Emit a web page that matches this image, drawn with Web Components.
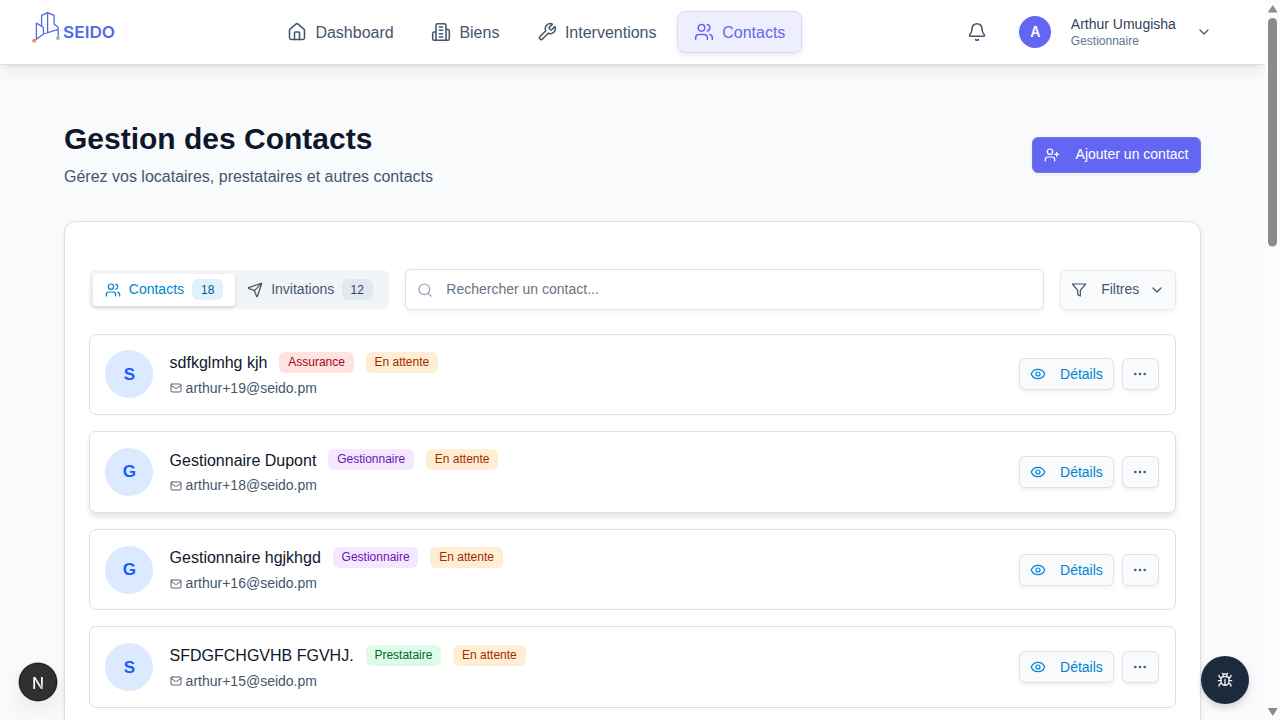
<!DOCTYPE html>
<html lang="fr">
<head>
<meta charset="utf-8">
<title>SEIDO - Gestion des Contacts</title>
<style>
html,body{margin:0;height:100%;overflow:hidden;background:#f8fafc;font-family:"Liberation Sans",Arial,sans-serif}
</style>
</head>
<body>
<seido-app></seido-app>
<script>
const ICONS = {
  home:'<path d="M15 21v-8a1 1 0 0 0-1-1h-4a1 1 0 0 0-1 1v8"/><path d="M3 10a2 2 0 0 1 .709-1.528l7-5.999a2 2 0 0 1 2.582 0l7 5.999A2 2 0 0 1 21 10v9a2 2 0 0 1-2 2H5a2 2 0 0 1-2-2z"/>',
  building:'<path d="M6 22V4a2 2 0 0 1 2-2h8a2 2 0 0 1 2 2v18Z"/><path d="M6 12H4a2 2 0 0 0-2 2v6a2 2 0 0 0 2 2h2"/><path d="M18 9h2a2 2 0 0 1 2 2v9a2 2 0 0 1-2 2h-2"/><path d="M10 6h4M10 10h4M10 14h4M10 18h4"/>',
  wrench:'<path d="M14.7 6.3a1 1 0 0 0 0 1.4l1.6 1.6a1 1 0 0 0 1.4 0l3.77-3.77a6 6 0 0 1-7.94 7.94l-6.91 6.91a2.12 2.12 0 0 1-3-3l6.91-6.91a6 6 0 0 1 7.94-7.94l-3.76 3.76z"/>',
  users:'<path d="M16 21v-2a4 4 0 0 0-4-4H6a4 4 0 0 0-4 4v2"/><circle cx="9" cy="7" r="4"/><path d="M22 21v-2a4 4 0 0 0-3-3.87"/><path d="M16 3.13a4 4 0 0 1 0 7.75"/>',
  bell:'<path d="M10.268 21a2 2 0 0 0 3.464 0"/><path d="M3.262 15.326A1 1 0 0 0 4 17h16a1 1 0 0 0 .74-1.673C19.41 13.956 18 12.499 18 8A6 6 0 0 0 6 8c0 4.499-1.411 5.956-2.738 7.326"/>',
  chevron:'<path d="m6 9 6 6 6-6"/>',
  userplus:'<path d="M16 21v-2a4 4 0 0 0-4-4H6a4 4 0 0 0-4 4v2"/><circle cx="9" cy="7" r="4"/><path d="M19 8v6M22 11h-6"/>',
  send:'<path d="M14.536 21.686a.5.5 0 0 0 .937-.024l6.5-19a.496.496 0 0 0-.635-.635l-19 6.5a.5.5 0 0 0-.024.937l7.93 3.18a2 2 0 0 1 1.112 1.11z"/><path d="m21.854 2.147-10.94 10.939"/>',
  search:'<circle cx="11" cy="11" r="8"/><path d="m21 21-4.3-4.3"/>',
  filter:'<path d="M22 3H2l8 9.46V19l4 2v-8.54z"/>',
  eye:'<path d="M2.062 12.348a1 1 0 0 1 0-.696 10.75 10.75 0 0 1 19.876 0 1 1 0 0 1 0 .696 10.75 10.75 0 0 1-19.876 0"/><circle cx="12" cy="12" r="3"/>',
  dots:'<circle cx="12" cy="12" r="1"/><circle cx="19" cy="12" r="1"/><circle cx="5" cy="12" r="1"/>',
  mail:'<rect width="20" height="16" x="2" y="4" rx="2"/><path d="m22 7-8.97 5.7a1.94 1.94 0 0 1-2.06 0L2 7"/>',
  bug:'<path d="m8 2 1.88 1.88M14.12 3.88 16 2M9 7.13v-1a3.003 3.003 0 1 1 6 0v1"/><path d="M12 20c-3.3 0-6-2.7-6-6v-3a4 4 0 0 1 4-4h4a4 4 0 0 1 4 4v3c0 3.3-2.7 6-6 6M12 20v-9"/><path d="M6.53 9C4.6 8.8 3 7.1 3 5M6 13H2M3 21c0-2.1 1.7-3.9 3.8-4M20.97 5c0 2.1-1.6 3.8-3.5 4M22 13h-4M17.2 17c2.1.1 3.8 1.9 3.8 4"/>'
};
const define = (name, render) => customElements.define(name, class extends HTMLElement {
  connectedCallback() {
    if (this.shadowRoot) return;
    this.attachShadow({mode:'open'}).innerHTML = '<style>*{box-sizing:border-box}</style>' + render(this);
  }
});
const a = (el, n, d='') => el.getAttribute(n) ?? d;

define('ui-icon', el => `<style>:host{display:block;flex:none;width:${a(el,'size','16')}px;height:${a(el,'size','16')}px}svg{display:block;width:100%;height:100%}</style>
<svg viewBox="0 0 24 24" fill="none" stroke="currentColor" stroke-width="${a(el,'stroke','1.85')}" stroke-linecap="round" stroke-linejoin="round">${ICONS[a(el,'name')]}</svg>`);

define('seido-logo', () => `<style>:host{display:block;width:90px;height:40px}svg{display:block}</style>
<svg width="90" height="40" viewBox="0 0 90 40" fill="none" stroke="#4f6be3" stroke-width="1.3" stroke-linejoin="round" stroke-linecap="round">
<path d="M4.400 27V11.100l6.900 4.100v5.600M9.600 13.800V3.400L15.600.7l6.500 2.700v8.600l4.100 3.600v9.500M15.600.7v19.500M3 28.200l8.500-6.200 14.700-4.600"/>
<circle cx="2.1" cy="28.700" r="2" fill="#fb8878" stroke="none"/><circle cx="26" cy="25.900" r="2" fill="#7fcab4" stroke="none"/>
<text x="31.100" y="25.700" textLength="52" lengthAdjust="spacingAndGlyphs" font-family="Inter" font-weight="600" font-size="16.400" fill="#4f6be3" stroke="none">SEIDO</text></svg>`);

define('nav-item', el => `<style>
:host{display:flex;align-items:center;gap:8px;height:41.6px;padding:0 15.8px;border:1px solid transparent;border-radius:8px;box-sizing:border-box;color:#45556c;font-size:16px;line-height:24px;width:${a(el,'w')}px;white-space:nowrap}
:host([active]){background:#efeefd;border-color:#dad9fa;color:#6366f1;box-shadow:0 3px 6px rgba(0,0,0,.08)}
span{padding-top:2px}
</style><ui-icon name="${a(el,'icon')}" size="20"></ui-icon><span><slot></slot></span>`);

define('user-menu', () => `<style>
:host{display:flex;align-items:center;color:#45556c}
.av{width:32px;height:32px;border-radius:50%;background:#6366f1;color:#fff;display:flex;align-items:center;justify-content:center;font-size:14px;font-weight:600;font-family:Inter,sans-serif;margin:0 19.6px 0 32.6px}
.n{font-size:14px;line-height:17px;padding-top:1px;color:#314158}.r{font-size:12px;line-height:16px;color:#62748e}
.t{width:125.2px;white-space:nowrap}
</style><ui-icon name="bell" size="20"></ui-icon><div class="av">A</div><div class="t"><div class="n">Arthur Umugisha</div><div class="r">Gestionnaire</div></div><ui-icon name="chevron"></ui-icon>`);

define('app-header', () => `<style>
:host{display:flex;align-items:center;height:64.8px;background:#fff;border-bottom:1px solid #dadee6;box-shadow:0 10px 15px -3px rgba(0,0,0,.06),0 4px 6px -4px rgba(0,0,0,.1);padding:0 52.8px 0 32px;box-sizing:border-box;position:relative;z-index:1}
seido-logo{margin-top:1px}nav{display:flex;gap:4px;margin-left:148.6px}user-menu{margin-left:auto}
</style><seido-logo></seido-logo>
<nav><nav-item w="140" icon="home">Dashboard</nav-item><nav-item w="101.5" icon="building">Biens</nav-item><nav-item w="153.300" icon="wrench">Interventions</nav-item><nav-item w="124.8" icon="users" active>Contacts</nav-item></nav><user-menu></user-menu>`);

define('ui-button', el => `<style>
:host{display:flex;align-items:center;box-sizing:border-box;height:32px;border:1px solid #dde1e8;border-radius:6px;background:#f8fafc;color:#0084d1;padding:0 9.8px;font-size:14px;line-height:20px;box-shadow:0 2px 4px rgba(0,0,0,.06);white-space:nowrap}
:host([kind=primary]){width:168.8px;height:36px;background:#6366f1;border-color:#7376f3;color:#fff;padding:0 11px}
:host([kind=filter]){width:116px;height:40px;border-color:#e6eaf2;color:#45556c;padding:0 10.2px}
:host([kind=more]){width:37.6px;color:#45556c}
span{margin-left:14px}:host([kind=primary]) span{margin-left:15.6px}
:host([kind=primary]) span,:host([kind=filter]) span{padding-bottom:1.600px}.f{margin-left:auto}
</style><ui-icon name="${a(el,'icon')}"></ui-icon>${el.textContent?'<span><slot></slot></span>':''}${a(el,'kind')==='filter'?'<ui-icon class="f" name="chevron"></ui-icon>':''}`);

define('page-heading', () => `<style>
:host{display:flex;align-items:center;justify-content:space-between;height:68px;margin-bottom:32px}
h1{margin:0;font-size:30px;line-height:36px;color:#0f172b}p{margin:8px 0 0;font-size:16px;line-height:24px;color:#45556c}
</style><div><h1>Gestion des Contacts</h1><p>Gérez vos locataires, prestataires et autres contacts</p></div><ui-button kind="primary" icon="userplus">Ajouter un contact</ui-button>`);

define('tab-item', el => `<style>
:host{display:flex;align-items:center;height:32px;box-sizing:border-box;padding:0 12px;border-radius:4px;font-size:14px;line-height:20px;color:#45556c;width:${a(el,'w')}px;white-space:nowrap}
:host([active]){background:#fff;color:#0084d1;box-shadow:0 2px 4px rgba(0,0,0,.12)}
span{margin-left:8px;padding-bottom:1.600px}b{margin-left:auto;font-weight:400;font-size:12px;line-height:20.600px;padding-top:1px;width:31px;text-align:center;border-radius:6px;background:#e2e8f0;color:#314158}
:host([active]) b{background:#dff2fe;color:#00598a}
</style><ui-icon name="${a(el,'icon')}"></ui-icon><span><slot></slot></span><b>${a(el,'count')}</b>`);

define('tab-list', () => `<style>:host{display:flex;align-items:center;box-sizing:border-box;width:300px;height:39.6px;padding:0 4px;background:#f1f5f9;border-radius:6px}</style><slot></slot>`);

define('search-field', () => `<style>
:host{display:flex;align-items:center;flex:1;height:40.4px;box-sizing:border-box;border:1px solid #dfe2e9;border-radius:6px;background:#fff;padding:0 11px;box-shadow:0 2px 4px rgba(0,0,0,.05);font-size:14px;color:#6a7282}
ui-icon{color:#90a1b9}span{margin-left:13.5px;padding-bottom:1.600px}
</style><ui-icon name="search"></ui-icon><span>Rechercher un contact...</span>`);

define('ui-badge', el => {
  const c = {red:['#ffe2e2','#9f0712'],purple:['#f3e8ff','#6e11b0'],green:['#dcfce7','#016630'],orange:['#ffedd4','#9f2d00']}[a(el,'tone')];
  return `<style>:host{display:block;height:21px;box-sizing:border-box;padding:0 8.8px;border-radius:6px;background:${c[0]};color:${c[1]};font-size:12px;line-height:20px;white-space:nowrap}</style><slot></slot>`;
});

define('contact-row', el => `<style>
:host{display:flex;align-items:center;box-sizing:border-box;height:81.6px;padding:0 15.8px;border:1px solid #dcdfe6;border-radius:7px;background:#fff}
:host([raised]){box-shadow:0 4px 7px -1px rgba(0,0,0,.13)}
.av{width:48px;height:48px;border-radius:50%;background:#dbeafe;color:#155dfc;font-size:17px;font-weight:700;display:flex;align-items:center;justify-content:center;margin:0 16.300px 0 -.3px;padding-top:1px}
.top{display:flex;gap:12px;align-items:center;height:24px;font-size:16px;color:#0f172b;white-space:nowrap}
.top span{padding-top:1.600px}
.mail{display:flex;align-items:center;gap:4px;margin-top:4px;height:20px;font-size:14px;color:#45556c}
.mail span{padding-bottom:1px}
.act{display:flex;gap:8px;margin-left:auto}
</style><div class="av">${a(el,'initial')}</div><div><div class="top"><span>${a(el,'name')}</span><ui-badge tone="${a(el,'tone')}">${a(el,'role')}</ui-badge><ui-badge tone="orange">En attente</ui-badge></div>
<div class="mail"><ui-icon name="mail" size="12"></ui-icon><span>${a(el,'mail')}</span></div></div>
<div class="act"><ui-button icon="eye">Détails</ui-button><ui-button kind="more" icon="dots"></ui-button></div>`);

define('contacts-card', () => `<style>
:host{display:block;box-sizing:border-box;height:560px;border:1px solid #dcdfe6;border-radius:12px;background:#fff;padding:47.8px 23.8px;box-shadow:0 2px 5px rgba(0,0,0,.08)}
.bar{display:flex;align-items:center;gap:16px;height:40px;margin-bottom:24px}.list{display:flex;flex-direction:column;gap:16px}
</style><div class="bar"><tab-list><tab-item w="142.4" icon="users" count="18" active>Contacts</tab-item><tab-item w="149.6" icon="send" count="12">Invitations</tab-item></tab-list><search-field></search-field><ui-button kind="filter" icon="filter">Filtres</ui-button></div>
<div class="list">
<contact-row initial="S" name="sdfkglmhg kjh" role="Assurance" tone="red" mail="arthur+19@seido.pm"></contact-row>
<contact-row raised initial="G" name="Gestionnaire Dupont" role="Gestionnaire" tone="purple" mail="arthur+18@seido.pm"></contact-row>
<contact-row initial="G" name="Gestionnaire hgjkhgd" role="Gestionnaire" tone="purple" mail="arthur+16@seido.pm"></contact-row>
<contact-row initial="S" name="SFDGFCHGVHB FGVHJ." role="Prestataire" tone="green" mail="arthur+15@seido.pm"></contact-row>
</div>`);

define('page-scrollbar', () => `<style>:host{display:block;width:15.2px;height:720px;background:#fcfcfc;flex:none}svg{display:block}</style>
<svg width="15" height="720" fill="#8b8b8b"><path d="M3 12l4.3-6.2q.5-.6 1 0L12.400 12q.2.6-.4.6H3.400q-.7 0-.4-.6zM3 708.500q-.3-.6.4-.6H12q.7 0 .4.6l-4.100 6.700q-.5.6-1 0z"/><rect x="3" y="18" width="9" height="228.500" rx="4.500"/></svg>`);

define('float-button', el => `<style>
:host{position:absolute;display:flex;align-items:center;justify-content:center;border-radius:50%;z-index:2;box-sizing:border-box}
:host([kind=next]){left:19px;top:663px;width:38px;height:38px;background:#303030;border:1px solid #1b1b1b;box-shadow:0 0 0 .5px #555,0 8px 20px rgba(0,0,0,.08)}
:host([kind=bug]){left:1200.600px;top:656px;width:48px;height:48px;background:#1d293d;color:#f1f5f9;box-shadow:0 4px 7px rgba(0,0,0,.14)}
span{font:500 16px Inter,sans-serif;color:transparent;background:linear-gradient(135deg,#fff 60%,#777);-webkit-background-clip:text;background-clip:text;line-height:20px;padding-top:1px}
</style>${a(el,'kind')==='bug'?'<ui-icon name="bug" stroke="2"></ui-icon>':'<span>N</span>'}`);

define('seido-app', () => `<style>
:host{display:flex;width:1280px;height:720px;overflow:hidden;position:relative}
.page{width:1264.8px;flex:none;height:720px;overflow:hidden}main{padding:56px 64px 0}
</style><div class="page"><app-header></app-header><main><page-heading></page-heading><contacts-card></contacts-card></main></div><page-scrollbar></page-scrollbar><float-button kind="next"></float-button><float-button kind="bug"></float-button>`);
</script>
</body>
</html>
